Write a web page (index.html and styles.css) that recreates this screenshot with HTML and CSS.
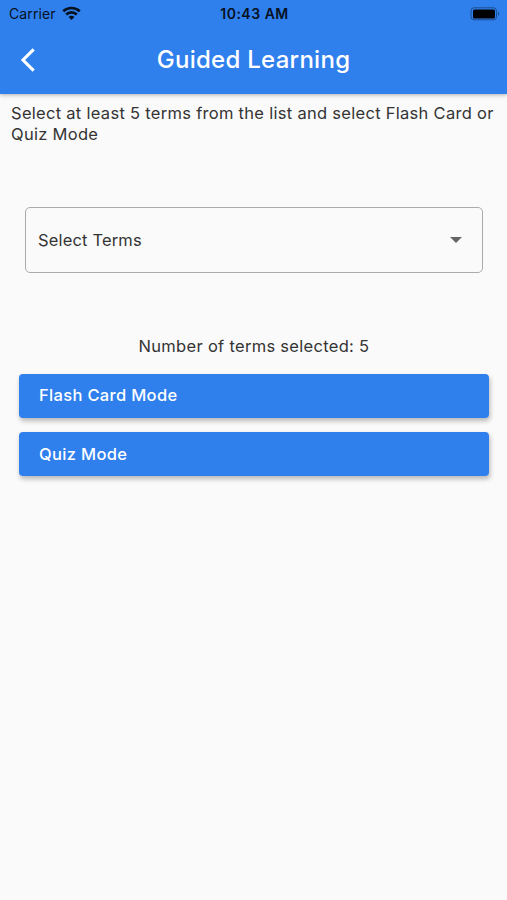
FILE: index.html
```html
<!DOCTYPE html>
<html lang="en">
<head>
<meta charset="utf-8">
<title>Guided Learning</title>
<link rel="stylesheet" href="styles.css">
</head>
<body>
<header class="header">
  <div class="status">
    <div class="carrier"><span>Carrier</span>
      <svg class="wifi" viewBox="0 0 20 15"><path d="M1.3 5.2a12.5 12.5 0 0 1 17.4 0M4.4 8.6a8 8 0 0 1 11.2 0" fill="none" stroke="#07111f" stroke-width="2.8"/><path d="M6.9 11.2a4.6 4.6 0 0 1 6.2 0L10 14.4z" fill="#07111f"/></svg>
    </div>
    <div class="time">10:43 AM</div>
    <svg class="battery" viewBox="0 0 30 14"><rect x="1" y=".8" width="25.5" height="12" rx="3" fill="none" stroke="#10305f" stroke-opacity=".65"/><rect x="3" y="2.5" width="22" height="9" rx="1.5" fill="#000"/><path d="M28 4.5q2.5 2.2 0 4.5z" fill="#10305f" opacity=".65"/></svg>
  </div>
  <div class="bar">
    <svg class="back" viewBox="0 0 16 26"><path d="M13.7 2.3L3 13l10.7 10.7" fill="none" stroke="#fff" stroke-width="3.1"/></svg>
    <h1 class="title">Guided Learning</h1>
  </div>
</header>
<main class="content">
  <p class="intro"><span class="line first">Select at least 5 terms from the list and select Flash Card or</span> <span class="line second">Quiz Mode</span></p>
  <div class="select"><span class="label">Select Terms</span><svg class="caret" viewBox="0 0 12 6"><path d="M0 0h12L6 6z" fill="#666"/></svg></div>
  <p class="count"><span>Number of terms selected: 5</span></p>
  <button class="button"><span class="flash">Flash Card Mode</span></button>
  <button class="button"><span class="quiz">Quiz Mode</span></button>
</main>
</body>
</html>
```
FILE: styles.css
```css
* { box-sizing: border-box; }
body { margin: 0; min-height: 900px; background: #fafafa; color: #343434; font-family: Inter, sans-serif; }
.header { height: 94px; background: #2f80ed; box-shadow: 0 1px 4px rgba(0,0,0,.3); }
.status { height: 27px; display: grid; grid-template-columns: 1fr auto 1fr; align-items: center; padding: 0 7px 0 9px; color: #07111f; font-size: 14px; }
.carrier { display: flex; align-items: center; gap: 6px; letter-spacing: .12px; }
.wifi { width: 19px; height: 15px; margin-top: -1px; }
.time { font-weight: 600; letter-spacing: .5px; }
.battery { width: 30px; height: 14px; justify-self: end; }
.bar { height: 66px; display: grid; grid-template-columns: 56px 1fr 56px; align-items: center; }
.back { width: 16px; height: 26px; margin: 0 0 1px 20px; }
.title { margin: 0; text-align: center; color: #fff; font-size: 24px; font-weight: 500; line-height: 30px; letter-spacing: .27px; white-space: nowrap; }
.content { padding: 9px 18px 0 19px; }
.intro { margin: 0 -12px 0 -8px; font-size: 16.5px; line-height: 21px; }
.line { display: block; white-space: nowrap; letter-spacing: .29px; }
.select { height: 66px; margin: 62px 6px 0; padding: 0 20px 0 12px; border: 1.5px solid #aaa; border-radius: 5px; display: flex; align-items: center; justify-content: space-between; font-size: 16.5px; letter-spacing: .16px; }
.caret { width: 12px; height: 6px; }
.count { margin: 62px 0 16.5px; line-height: 22px; text-align: center; font-size: 16.5px; letter-spacing: .3px; }
.button { display: block; width: 100%; height: 44px; margin: 0 0 14.5px; padding: 0 20px 1px; border: 0; border-radius: 4px; background: #2f80ed; color: #fff; box-shadow: 1px 3px 5px rgba(0,0,0,.27); text-align: left; font: 500 16.5px/22px Inter, sans-serif; letter-spacing: .33px; }
```
